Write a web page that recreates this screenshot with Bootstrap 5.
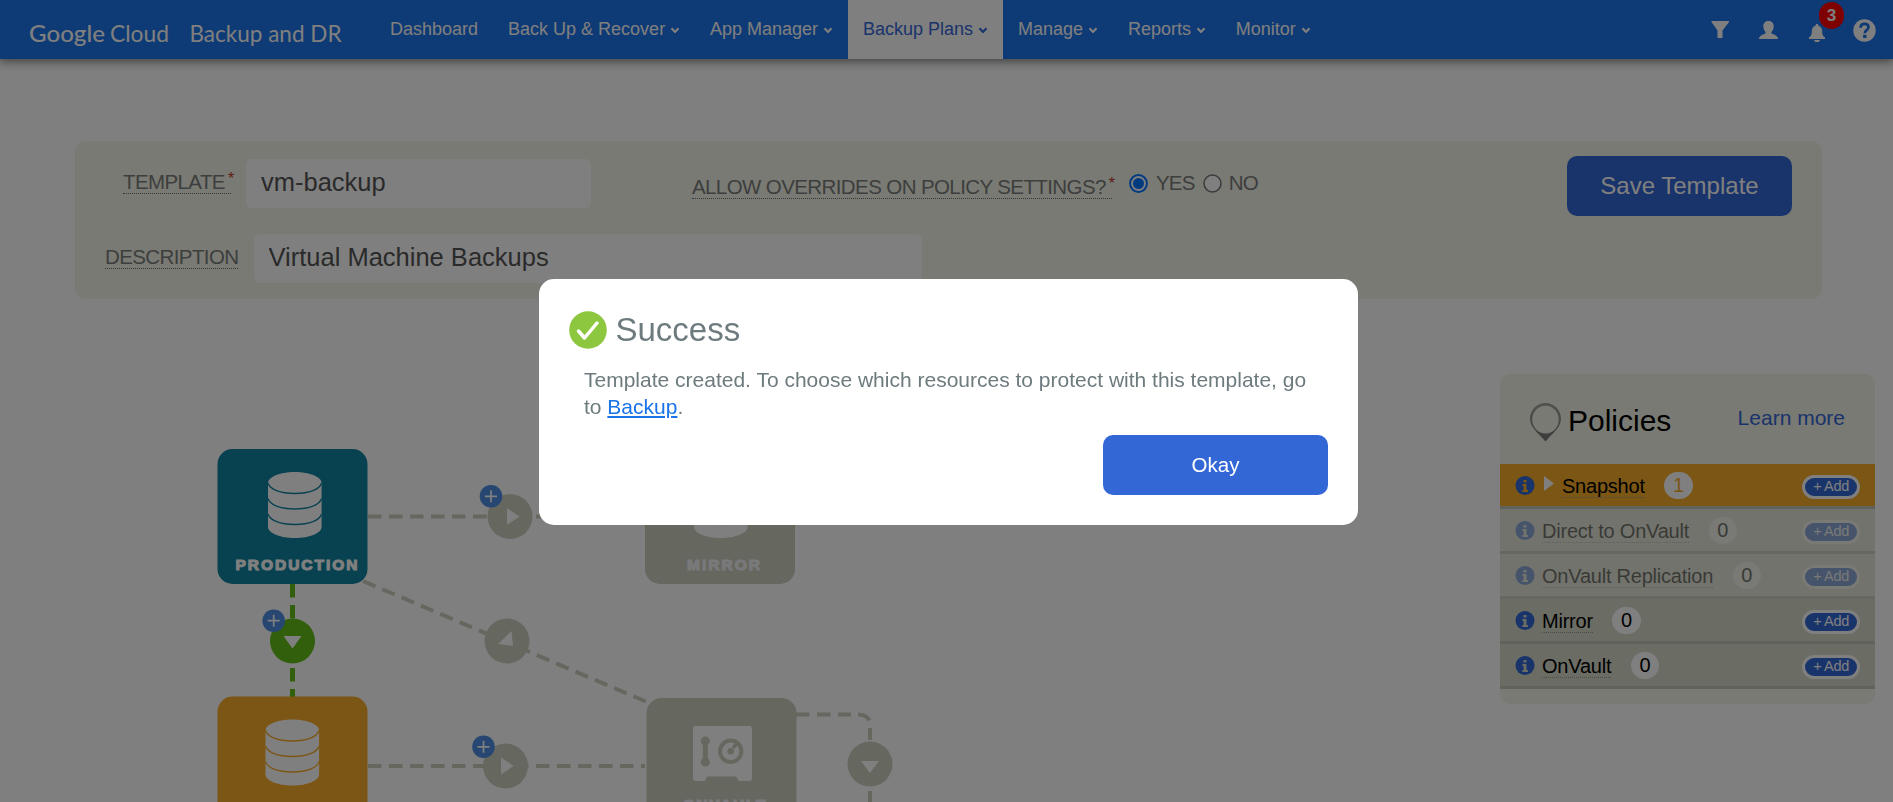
<!DOCTYPE html>
<html lang="en">
<head>
<meta charset="utf-8">
<meta name="viewport" content="width=device-width, initial-scale=1">
<title>Backup and DR - Backup Plans</title>
<link href="https://cdn.jsdelivr.net/npm/bootstrap@5.3.0/dist/css/bootstrap.min.css" rel="stylesheet">
<style>
body{font-family:"Liberation Sans",Arial,sans-serif;background:#fff;height:802px;overflow:hidden}
.topbar{height:59px;background:#1c74ea;box-shadow:0 1px 10px 1px rgba(0,0,0,.55)}
.brand-logo{width:322px;margin-left:24px}
.topbar .nav{margin-left:29px}
.topbar .nav-link{height:59px;color:#fff;font-size:18px;line-height:27px;padding:16px 15px 0;white-space:nowrap}
.topbar .nav-link.active{background:#fff;color:#3367d6}
.chev{width:10px;height:7px;margin-left:4.9px}
.tools{width:182px}
.alert-count{position:absolute;left:10px;top:-22px;width:25px;height:27px;background:#f00;color:#fff;font:bold 17px/27px "Liberation Sans",sans-serif;border-radius:13px;text-align:center}
.bell{position:relative}
.form-panel{margin:82px 71px 0 75px;height:158px;background:#f2f4e6;border-radius:11px;padding:15px 30px 0}
.lbl{color:#7b7d7c;font-size:20.500px;letter-spacing:-.6px;line-height:22px;border-bottom:1.5px dotted #6e706e;white-space:nowrap}
.plain{color:#7b7d7c;font-size:20.500px;letter-spacing:-.8px;line-height:24px}
.lbl sup{color:#c0392b;font-size:16px;top:-.3em;margin-left:3px;line-height:0}
.field{height:49px;border:0;border-radius:6px;font-size:25.500px;color:#555;padding:0 15px 2px;background:#fff}
.big-btn{width:225px;height:60px;background:#3367d6;color:#fff;border-radius:10px;border:0}
.policies{width:375px;height:330px;margin:75px 18px 0 0;background:#f2f4e6;border-radius:10px;overflow:hidden}
.policies header{height:90px;padding:0 30px}
.prow{height:45px;border-bottom:3px solid #c2c4b6;background:#d6d8c9;font-size:20px;padding:0 15px;color:#000}
.prow .nm{border-bottom:1.5px dotted #999b90;line-height:22px;padding-top:2px;margin-left:7px;letter-spacing:-.22px}
.prow.off>*{opacity:.5}
.prow.off{background:#e5e7d9;border-color:#cdcfc2}
.prow.on{background:#f6ac2a}
.cnt{height:27px;min-width:28.5px;border-radius:14px;background:#fff;line-height:27px;text-align:center;margin-left:19.5px}
.add{width:58px;height:24px;border:3px solid #fff;border-radius:12px;background:#3367d6;color:#fff;font-size:14.500px;letter-spacing:-.35px;line-height:16px;text-align:center;padding:0 0 2px;margin-top:3px}
.modal-dialog{width:819px;max-width:none;margin:279px 0 0 539px}
.modal-content{height:246px;border:0;border-radius:15px;padding:32px 30px 0;color:#6d7b7e}
.modal-content p{font-size:21px;line-height:27px;margin:17px 15px 0}
.modal-content a{color:#1a73e8}
</style>
</head>
<body>
<nav class="topbar d-flex align-items-start position-relative">
  <svg class="brand-logo" height="59" fill="#fff" font-family="Lato,sans-serif">
    <text x="5" y="41.500" font-size="23" font-weight="500" textLength="76" lengthAdjust="spacingAndGlyphs">Google</text>
    <text x="86" y="41.500" font-size="23" textLength="59" lengthAdjust="spacingAndGlyphs">Cloud</text>
    <text x="165.500" y="41.500" font-size="23" textLength="152" lengthAdjust="spacingAndGlyphs">Backup and DR</text>
  </svg>
  <div class="nav flex-nowrap">
    <a class="nav-link">Dashboard</a>
    <a class="nav-link">Back Up &amp; Recover<svg class="chev" viewBox="0 0 9 7"><path d="M1 1.3l3.5 3.7L8 1.3" fill="none" stroke="currentColor" stroke-width="2.2"/></svg></a>
    <a class="nav-link">App Manager<svg class="chev" viewBox="0 0 9 7"><path d="M1 1.3l3.5 3.7L8 1.3" fill="none" stroke="currentColor" stroke-width="2.2"/></svg></a>
    <a class="nav-link active">Backup Plans<svg class="chev" viewBox="0 0 9 7"><path d="M1 1.3l3.5 3.7L8 1.3" fill="none" stroke="currentColor" stroke-width="2.2"/></svg></a>
    <a class="nav-link">Manage<svg class="chev" viewBox="0 0 9 7"><path d="M1 1.3l3.5 3.7L8 1.3" fill="none" stroke="currentColor" stroke-width="2.2"/></svg></a>
    <a class="nav-link">Reports<svg class="chev" viewBox="0 0 9 7"><path d="M1 1.3l3.5 3.7L8 1.3" fill="none" stroke="currentColor" stroke-width="2.2"/></svg></a>
    <a class="nav-link">Monitor<svg class="chev" viewBox="0 0 9 7"><path d="M1 1.3l3.5 3.7L8 1.3" fill="none" stroke="currentColor" stroke-width="2.2"/></svg></a>
  </div>
  <div class="tools ms-auto d-flex align-items-center" style="height:59px">
    <svg width="18" height="18" fill="#fff"><path d="M.5 0H18v1l-6.500 8.500V17H6.500V9.500L.5 1z"/></svg>
    <svg width="19" height="18" fill="#fff" style="margin-left:30px"><path d="M9.500 0c3.200 0 5.200 2 5.200 5.200 0 2.800-1.200 4.600-2.200 5.600v1.700c2 .8 6.500 2 6.500 5.500H0c0-3.500 4.500-4.700 6.500-5.500v-1.700C5.500 9.800 4.300 8 4.300 5.200 4.300 2 6.300 0 9.500 0z"/></svg>
    <span class="bell d-flex" style="margin:6px 0 0 31px"><svg width="16" height="18" fill="#fff"><path d="M8 0c1 0 1.500.7 1.500 1.700C12 2.300 13.200 4.400 13.200 7c0 4 .9 5.200 2.800 6.300V15H0v-1.700C1.900 12.200 2.800 11 2.800 7c0-2.600 1.200-4.700 3.700-5.300C6.500.7 7 0 8 0zM5 16h6c-.3 1.200-1.500 2.200-3 2.200S5.300 17.200 5 16z"/></svg><span class="alert-count">3</span></span>
    <svg width="23" height="23" style="margin:2px 0 0 28px"><circle cx="11.500" cy="11.500" r="11.200" fill="#fff"/><path d="M7.600 8.800c0-2.400 1.600-3.900 4-3.900 2.300 0 3.900 1.300 3.900 3.300 0 3-3.700 2.900-3.700 6" fill="none" stroke="#1c74ea" stroke-width="2.700"/><rect x="10" y="15.800" width="3.600" height="3.200" rx="1" fill="#1c74ea"/></svg>
  </div>
</nav>

<main>
  <section class="form-panel">
    <div class="d-flex align-items-start">
      <div class="d-flex align-items-start" style="width:587px;padding:3px 0 0 18px">
        <label class="lbl" style="width:108px;margin:12px 15px 0 0">TEMPLATE<sup>*</sup></label>
        <input class="field" style="width:345px" value="vm-backup">
      </div>
      <label class="lbl" style="width:420px;margin-top:20px">ALLOW OVERRIDES ON POLICY SETTINGS?<sup>*</sup></label>
      <div class="plain d-flex align-items-center" style="margin:15px 0 0 17px">
        <svg width="19" height="19"><circle cx="9.500" cy="9.500" r="8.400" fill="#fff" stroke="#0075ff" stroke-width="2"/><circle cx="9.500" cy="9.500" r="5.500" fill="#0075ff"/></svg>
        <span style="margin:0 8px">YES</span>
        <svg width="19" height="19"><circle cx="9.500" cy="9.500" r="8.500" fill="#fff" stroke="#767676" stroke-width="1.500"/></svg>
        <span style="margin-left:7px">NO</span>
      </div>
      <button class="big-btn ms-auto" style="font-size:24px">Save Template</button>
    </div>
    <div class="d-flex align-items-start" style="margin-top:18px">
      <label class="lbl" style="margin:12px 15.500px 0 0;width:133px">DESCRIPTION</label>
      <input class="field" style="width:668px" value="Virtual Machine Backups">
    </div>
  </section>

  <div class="d-flex align-items-start justify-content-between">
    <!-- Backup flow diagram; the viewBox uses page coordinates -->
    <svg width="1000" height="503" viewBox="0 299 1000 503" font-family="'Liberation Sans',sans-serif">
      <defs>
        <g id="db"><path d="M0 11v44c0 6 12 11 26.800 11s26.800-5 26.800-11V11c0-6-12-11-26.800-11S0 5 0 11z" fill="#fff"/><path d="M0 11c2 6.500 12 10.500 26.800 10.500S51.600 17.500 53.600 11M0 26.500c2 6.500 12 10.500 26.800 10.500s24.800-4 26.800-10.500M0 42c2 6.500 12 10.500 26.800 10.500s24.800-4 26.800-10.500" fill="none" stroke="currentColor" stroke-width="1.300"/></g>
        <g id="plus"><circle r="11.300" fill="#4e8fe4"/><path d="M-6 0H6M0-6V6" stroke="#fff" stroke-width="1.700"/></g>
      </defs>
      <g fill="none" stroke="#cccebf" stroke-width="4" stroke-dasharray="13.500 7.500">
        <path d="M368 516.500H645M368 766H645"/>
        <path d="M363 581L647 702"/>
        <path d="M796 714.500H851M858 714.500q9 0 12 7M870 728V740M870 791V805"/>
      </g>
      <path d="M292.500 584V697" stroke="#64be18" stroke-width="5" stroke-dasharray="13.500 7.500"/>
      <rect x="217.500" y="449" width="150" height="135" rx="15" fill="#1084a0"/>
      <rect x="217.500" y="696.500" width="150" height="135" rx="15" fill="#f6ac2a"/>
      <rect x="645" y="449" width="150" height="135" rx="15" fill="#cccebf"/>
      <rect x="646.500" y="698" width="150" height="135" rx="15" fill="#cccebf"/>
      <use href="#db" x="268" y="472" color="#1084a0"/>
      <use href="#db" x="265.500" y="719.500" color="#f6ac2a"/>
      <use href="#db" x="694" y="472" color="#cccebf"/>
      <g font-size="15.500" font-weight="bold" stroke-width="1.100">
        <text x="235.500" y="569.500" textLength="122" fill="#fff" stroke="#fff">PRODUCTION</text>
        <text x="687" y="569.500" textLength="73" fill="#f3f3f7" stroke="#f3f3f7">MIRROR</text>
        <text x="682.500" y="809.500" textLength="83" fill="#f3f3f7" stroke="#f3f3f7">ONVAULT</text>
      </g>
      <rect x="693" y="726" width="59" height="55" rx="3" fill="#fff"/>
      <g fill="#cccebf">
        <path d="M705 781l2-4.500h29l3 4.500z"/>
        <circle cx="705.300" cy="741" r="4.500"/><circle cx="705.300" cy="762" r="4.500"/><rect x="702.800" y="741" width="5" height="21"/>
        <circle cx="730.700" cy="751.300" r="10.700" fill="none" stroke="#cccebf" stroke-width="4"/><circle cx="730.700" cy="751.300" r="3.300"/>
        <path d="M733 748l5-6" stroke="#cccebf" stroke-width="3.500"/>
        <circle cx="510" cy="516.500" r="22.500"/><circle cx="507" cy="641" r="22.500"/><circle cx="505.500" cy="766" r="22.500"/><circle cx="870" cy="764" r="22.500"/>
      </g>
      <circle cx="292.500" cy="641" r="22.500" fill="#64be18"/>
      <path fill="#fff" d="M507 508v17l12.500-8.500zM501 757.500v17l12.500-8.500zM511.500 631l1.500 15-15-2zM283.500 636h18l-9 12.500zM861 761h18l-9 12z"/>
      <use href="#plus" x="491" y="496.300"/><use href="#plus" x="273.700" y="620.700"/><use href="#plus" x="483.500" y="746.800"/>
    </svg>

    <aside class="policies">
      <header class="d-flex align-items-center">
        <svg width="31" height="39" style="margin-top:7px"><defs><linearGradient id="pin" x2="0" y2="1"><stop offset="0" stop-color="#a4a4a0"/><stop offset="1" stop-color="#777"/></linearGradient></defs><path fill="url(#pin)" fill-rule="evenodd" d="M15.500 0C24 0 31 7 31 15.800c0 9.200-9.500 15.200-15.500 22.700C9.500 31 0 25 0 15.800 0 7 7 0 15.500 0zM15.500 2.700A12.800 13.400 0 0 0 15.500 30.500 12.800 13.400 0 0 0 15.500 2.700z"/></svg>
        <span class="text-black" style="font-size:30px;margin:2px 0 0 7px">Policies</span>
        <a class="ms-auto text-decoration-none" style="font-size:21px;color:#3367d6;margin-top:-3px">Learn more</a>
      </header>
      <div class="prow on d-flex align-items-center"><svg class="inf" width="20" height="20"><circle cx="10" cy="10.500" r="9.500" fill="#3367d6"/><path d="M8.500 5h3v2.500h-3zM7.500 9h4v6H13v2H7.300v-2h1.300v-4H7.500z" fill="#f6ac2a"/></svg><svg width="10" height="15" style="margin:-4px 1px 0 9px"><path d="M0 0l10 7.500L0 15z" fill="#fff"/></svg><span class="nm">Snapshot</span><span class="cnt" style="color:#f6ac2a">1</span><button class="add ms-auto">+ Add</button></div>
      <div class="prow off d-flex align-items-center"><svg width="20" height="20"><circle cx="10" cy="10.500" r="9.500" fill="#3367d6"/><path d="M8.500 5h3v2.500h-3zM7.500 9h4v6H13v2H7.300v-2h1.300v-4H7.500z" fill="#e5e7d9"/></svg><span class="nm">Direct to OnVault</span><span class="cnt">0</span><button class="add ms-auto">+ Add</button></div>
      <div class="prow off d-flex align-items-center"><svg width="20" height="20"><circle cx="10" cy="10.500" r="9.500" fill="#3367d6"/><path d="M8.500 5h3v2.500h-3zM7.500 9h4v6H13v2H7.300v-2h1.300v-4H7.500z" fill="#e5e7d9"/></svg><span class="nm">OnVault Replication</span><span class="cnt">0</span><button class="add ms-auto">+ Add</button></div>
      <div class="prow d-flex align-items-center"><svg width="20" height="20"><circle cx="10" cy="10.500" r="9.500" fill="#3367d6"/><path d="M8.500 5h3v2.500h-3zM7.500 9h4v6H13v2H7.300v-2h1.300v-4H7.500z" fill="#d6d8c9"/></svg><span class="nm">Mirror</span><span class="cnt">0</span><button class="add ms-auto">+ Add</button></div>
      <div class="prow d-flex align-items-center"><svg width="20" height="20"><circle cx="10" cy="10.500" r="9.500" fill="#3367d6"/><path d="M8.500 5h3v2.500h-3zM7.500 9h4v6H13v2H7.300v-2h1.300v-4H7.500z" fill="#d6d8c9"/></svg><span class="nm">OnVault</span><span class="cnt">0</span><button class="add ms-auto">+ Add</button></div>
    </aside>
  </div>
</main>

<div class="modal-backdrop show"></div>
<div class="modal d-block overflow-hidden" role="dialog">
  <div class="modal-dialog">
    <div class="modal-content">
      <div class="d-flex align-items-center">
        <svg width="38" height="38" style="margin-left:-.5px"><circle cx="19" cy="19" r="18.800" fill="#8dc63f"/><path d="M9.500 20l6 7L28 12" fill="none" stroke="#fff" stroke-width="3.500" stroke-linecap="round" stroke-linejoin="round"/></svg>
        <span style="font-size:33px;line-height:38px;margin-left:9px">Success</span>
      </div>
      <p>Template created. To choose which resources to protect with this template, go to <a href="#">Backup</a>.</p>
      <button class="big-btn align-self-end" style="font-size:20.500px;margin-top:15px">Okay</button>
    </div>
  </div>
</div>
<script src="https://cdn.jsdelivr.net/npm/bootstrap@5.3.0/dist/js/bootstrap.bundle.min.js"></script>
</body>
</html>
